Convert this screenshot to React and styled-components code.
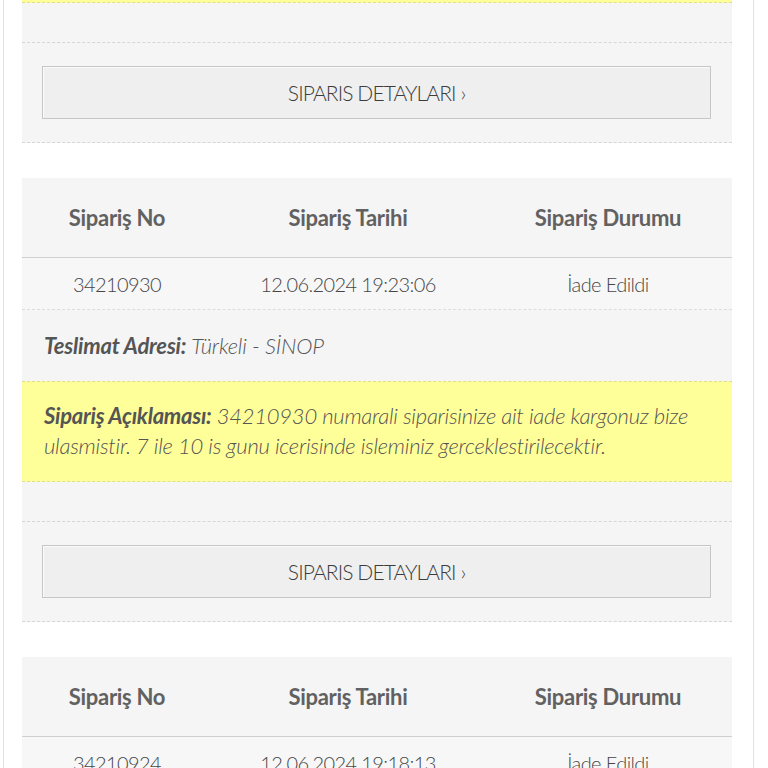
import React from "react";
import styled, { createGlobalStyle } from "styled-components";

const GlobalStyle = createGlobalStyle`
  html, body {
    margin: 0;
    padding: 0;
    background: #fff;
    overflow: hidden;
  }
  body {
    font-family: "Lato", "Roboto", sans-serif;
    color: #555;
  }
`;

const orders = [
  {
    no: "34210936",
    date: "12.06.2024 19:30:11",
    status: "İade Edildi",
    address: "Türkeli - SİNOP",
  },
  {
    no: "34210930",
    date: "12.06.2024 19:23:06",
    status: "İade Edildi",
    address: "Türkeli - SİNOP",
  },
  {
    no: "34210924",
    date: "12.06.2024 19:18:13",
    status: "İade Edildi",
    address: "Türkeli - SİNOP",
  },
];

const OrderCard = ({ order }) => {
  return (
    <StCard>
      <StGridRow head>
        <StCell>Sipariş No</StCell>
        <StCell>Sipariş Tarihi</StCell>
        <StCell>Sipariş Durumu</StCell>
      </StGridRow>
      <StGridRow>
        <StCell>{order.no}</StCell>
        <StCell>{order.date}</StCell>
        <StCell>{order.status}</StCell>
      </StGridRow>
      <StAddress>
        <b>Teslimat Adresi:</b> {order.address}
      </StAddress>
      <StNote>
        <b>Sipariş Açıklaması:</b> {order.no} numarali siparisinize ait iade
        kargonuz bize ulasmistir. 7 ile 10 is gunu icerisinde isleminiz
        gerceklestirilecektir.
      </StNote>
      <StEmpty />
      <StFooter>
        <StButton>SIPARIS DETAYLARI ›</StButton>
      </StFooter>
    </StCard>
  );
};

const App = () => {
  return (
    <>
      <GlobalStyle />
      <StPage>
        <StList>
          {orders.map((order) => (
            <OrderCard key={order.no} order={order} />
          ))}
        </StList>
      </StPage>
    </>
  );
};

export default App;

const StPage = styled.div`
  margin-left: 3px;
  width: 711px;
  height: 768px;
  overflow: hidden;
  border-left: 1px solid #e2e2e2;
  border-right: 1px solid #e2e2e2;
  padding: 0 20px 0 18px;
`;

const StList = styled.div`
  display: flex;
  flex-direction: column;
  gap: 35px;
  margin-top: -301px;
`;

const StCard = styled.div`
  width: 710px;
  background: #f5f5f5;
  border-bottom: 1px dashed #d6d6d6;
`;

const StGridRow = styled.div`
  display: grid;
  grid-template-columns: 190px 272px 1fr;
  align-items: center;
  height: ${({ head }) => (head ? "79px" : "51px")};
  border-bottom: 1px ${({ head }) => (head ? "solid #cfcfcf" : "dashed #dcdcdc")};
  font-size: ${({ head }) => (head ? "22px" : "20px")};
  font-weight: ${({ head }) => (head ? 700 : 300)};
  letter-spacing: ${({ head }) => (head ? "-0.3px" : "-0.6px")};
  color: ${({ head }) => (head ? "#616161" : "#464646")};
  background: ${({ head }) => (head ? "#f5f5f5" : "#f7f7f7")};
`;

const StCell = styled.div`
  text-align: center;
`;

const StAddress = styled.div`
  height: 71px;
  display: flex;
  align-items: center;
  gap: 5px;
  padding-left: 22px;
  font-size: 22px;
  font-weight: 300;
  font-style: italic;
  letter-spacing: -0.2px;
  color: #555;
  b {
    font-weight: 700;
    color: #555;
  }
`;

const StNote = styled.div`
  background: #ffff99;
  border-top: 1px dashed #dede9a;
  border-bottom: 1px dashed #dede9a;
  padding: 19px 22px 20px 22px;
  height: 60px;
  font-size: 22px;
  font-weight: 300;
  line-height: 30px;
  font-style: italic;
  letter-spacing: -0.25px;
  color: #555;
  b {
    font-weight: 700;
    color: #555;
  }
`;

const StEmpty = styled.div`
  height: 39px;
  border-bottom: 1px dashed #d6d6d6;
`;

const StFooter = styled.div`
  padding: 23px 21px 23px 20px;
`;

const StButton = styled.button`
  display: block;
  width: 100%;
  height: 53px;
  background: #efefef;
  border: 1px solid #c6c6c6;
  box-shadow: inset 1px 1px 0 #fafafa;
  font-family: inherit;
  font-size: 21px;
  font-weight: 300;
  color: #3c3c3c;
  letter-spacing: -0.9px;
  cursor: pointer;
`;
